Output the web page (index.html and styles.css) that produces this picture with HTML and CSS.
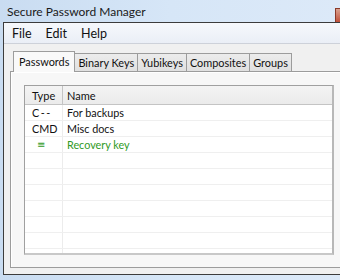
FILE: index.html
```html
<!DOCTYPE html>
<html>
<head>
<meta charset="utf-8">
<link rel="stylesheet" href="styles.css">
</head>
<body>
<div class="screen">
  <div class="titlebar">
    <span class="title">Secure Password Manager</span>
    <span class="close"></span>
  </div>
  <div class="window">
    <div class="menubar">
      <span class="menu">File</span>
      <span class="menu">Edit</span>
      <span class="menu">Help</span>
    </div>
    <div class="body">
      <div class="tabs">
        <div class="tab active">Passwords</div>
        <div class="tab">Binary Keys</div>
        <div class="tab">Yubikeys</div>
        <div class="tab">Composites</div>
        <div class="tab">Groups</div>
      </div>
      <div class="panel">
        <div class="table">
          <div class="row head">
            <div class="c1">Type</div>
            <div class="c2">Name</div>
          </div>
          <div class="row"><div class="c1 dash">C--</div><div class="c2">For backups</div></div>
          <div class="row"><div class="c1">CMD</div><div class="c2">Misc docs</div></div>
          <div class="row green"><div class="c1 ico">≡</div><div class="c2">Recovery key</div></div>
          <div class="row"><div class="c1"></div><div class="c2"></div></div>
          <div class="row"><div class="c1"></div><div class="c2"></div></div>
          <div class="row"><div class="c1"></div><div class="c2"></div></div>
          <div class="row"><div class="c1"></div><div class="c2"></div></div>
          <div class="row"><div class="c1"></div><div class="c2"></div></div>
          <div class="row"><div class="c1"></div><div class="c2"></div></div>
          <div class="row last"><div class="c1"></div><div class="c2"></div></div>
        </div>
      </div>
    </div>
  </div>
</div>
</body>
</html>
```
FILE: styles.css
```css
html, body {
  margin: 0;
  padding: 0;
}
body {
  width: 340px;
  height: 280px;
  overflow: hidden;
  font-family: Lato, "Noto Sans", sans-serif;
  font-size: 12px;
  color: #111111;
}
.screen {
  width: 340px;
  height: 280px;
  background: linear-gradient(90deg, #c9dcf1 0%, #d6e6f7 50%, #dce9f8 100%);
  overflow: hidden;
}
.titlebar {
  height: 22px;
  display: flex;
  justify-content: space-between;
  align-items: flex-start;
}
.title {
  padding-left: 7px;
  line-height: 24px;
  font-size: 12px;
  color: #1a1a1a;
}
.close {
  width: 4px;
  height: 13px;
  margin-top: 8px;
  background: linear-gradient(180deg, #d9a08e, #c0503a);
  border: 1px solid #8a3a2a;
  border-right: none;
  border-bottom: none;
}
.window {
  margin-left: 3px;
  width: 380px;
  height: 251px;
  border-left: 1px solid #3c3c3c;
  border-top: 1px solid #3c3c3c;
  border-bottom: 1px solid #3c3c3c;
  background: #f0f0f0;
}
.menubar {
  height: 20px;
  display: flex;
  gap: 14px;
  padding-left: 8px;
  background: linear-gradient(180deg, #f6f8fc 0%, #eaeef6 100%);
  border-bottom: 1px solid #cdd1d9;
}
.menu {
  line-height: 22px;
  font-size: 12.5px;
  color: #111111;
}
.body {
  padding: 6px 0 0 6px;
}
.tabs {
  display: flex;
  align-items: flex-end;
  padding-left: 3px;
  height: 21px;
  position: relative;
  z-index: 1;
}
.tab {
  height: 17px;
  line-height: 18px;
  padding: 0 3px;
  font-size: 10.9px;
  color: #111111;
  background: linear-gradient(180deg, #ececec, #e0e0e0);
  border: 1px solid #9c9c9c;
  border-bottom: none;
  margin-left: -1px;
}
.tab.active {
  height: 20px;
  line-height: 20px;
  background: #f9f9f9;
  margin-left: 0;
  margin-bottom: -1px;
  padding: 0 5px;
  z-index: 2;
}
.panel {
  height: 182px;
  border: 1px solid #9c9c9c;
  border-right: none;
  background: #f7f7f7;
  padding: 13px 0 0 13px;
  box-shadow: inset 1px 1px 0 #ffffff;
}
.table {
  width: 307px;
  height: 167px;
  border: 1px solid #a0a0a0;
  border-right: 2px solid #b8b8b8;
  border-bottom: 2px solid #c8c8c8;
  background: #ffffff;
  overflow: hidden;
}
.row {
  display: flex;
  height: 15px;
  line-height: 16px;
  border-bottom: 1px solid #efefef;
  font-size: 10.8px;
}
.row.head {
  height: 18px;
  line-height: 19px;
  background: linear-gradient(180deg, #f4f4f4, #ebebeb);
  border-bottom: 1px solid #c4c4c4;
  font-size: 11px;
}
.row.last {
  border-bottom: none;
}
.c1 {
  padding-left: 7px;
  border-right: 1px solid #ececec;
  flex: none;
  box-sizing: border-box;
  width: 38px;
}
.dash {
  letter-spacing: 1.5px;
}
.head .c1 {
  border-right: 1px solid #c4c4c4;
}
.c2 {
  padding-left: 4px;
  flex: 1;
}
.green {
  color: #2f9a25;
}
.ico {
  padding-left: 12px;
  font-family: "DejaVu Sans", sans-serif;
  font-size: 10px;
  color: #2f9a25;
}
```
